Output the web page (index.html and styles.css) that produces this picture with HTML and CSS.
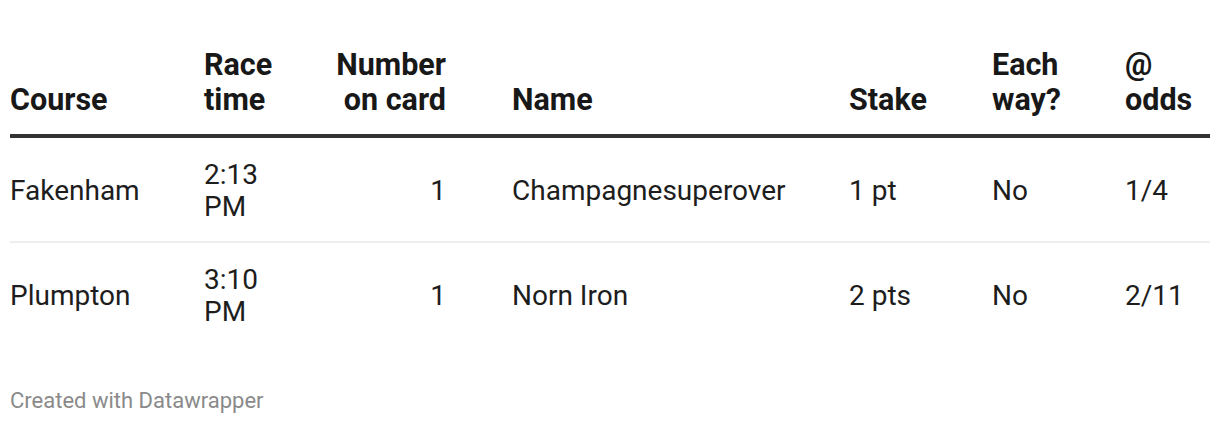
FILE: index.html
```html
<!DOCTYPE html>
<html>
<head>
<meta charset="utf-8">
<link rel="stylesheet" href="styles.css">
</head>
<body>
<div class="chart">
  <table class="bets">
    <colgroup>
      <col class="c-course">
      <col class="c-time">
      <col class="c-num">
      <col class="c-name">
      <col class="c-stake">
      <col class="c-ew">
      <col class="c-odds">
    </colgroup>
    <thead>
      <tr>
        <th>Course</th>
        <th class="wrap-time">Race time</th>
        <th class="num">Number on card</th>
        <th>Name</th>
        <th>Stake</th>
        <th class="wrap-ew">Each way?</th>
        <th class="wrap-odds">@ odds</th>
      </tr>
    </thead>
    <tbody>
      <tr>
        <td>Fakenham</td>
        <td class="wrap-time">2:13 PM</td>
        <td class="num">1</td>
        <td>Champagnesuperover</td>
        <td>1 pt</td>
        <td>No</td>
        <td>1/4</td>
      </tr>
      <tr>
        <td>Plumpton</td>
        <td class="wrap-time">3:10 PM</td>
        <td class="num">1</td>
        <td>Norn Iron</td>
        <td>2 pts</td>
        <td>No</td>
        <td>2/11</td>
      </tr>
    </tbody>
  </table>
  <div class="footer">Created with Datawrapper</div>
</div>
</body>
</html>
```

FILE: styles.css
```css
html, body {
  margin: 0;
  padding: 0;
  background: #ffffff;
}
body {
  font-family: Roboto, "Liberation Sans", sans-serif;
  color: #1d1d1d;
}
.chart {
  padding: 47px 10px 0 10px;
}
.bets {
  width: 1200px;
  border-collapse: collapse;
  table-layout: fixed;
}
.c-course { width: 194px; }
.c-time { width: 86px; }
.c-num { width: 222px; }
.c-name { width: 337px; }
.c-stake { width: 143px; }
.c-ew { width: 133px; }
.c-odds { width: 85px; }

.bets th {
  font-size: 30.5px;
  line-height: 35px;
  font-weight: 700;
  color: #181818;
  text-align: left;
  vertical-align: bottom;
  padding: 0 0 17px 0;
  border-bottom: 4px solid #333333;
}
.bets td {
  font-size: 28px;
  line-height: 32px;
  font-weight: 400;
  text-align: left;
  vertical-align: middle;
  padding: 21px 0 18px 0;
}
.bets tbody tr:first-child td {
  border-bottom: 2px solid #eeeeee;
}
.bets .num {
  text-align: right;
  padding-left: 36px;
  padding-right: 66px;
}
.bets .wrap-ew {
  padding-right: 30px;
}
.bets .wrap-odds {
  padding-right: 10px;
}
.footer {
  margin-top: 43px;
  font-size: 22px;
  line-height: 24px;
  color: #8a8a8a;
}
```
